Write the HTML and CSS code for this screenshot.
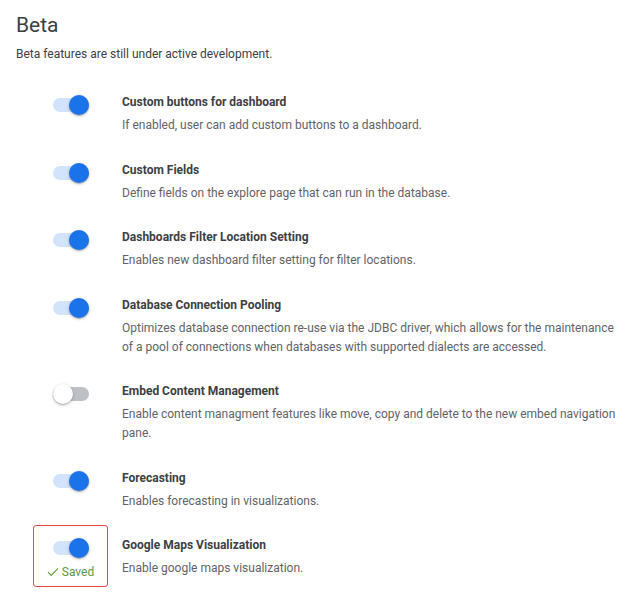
FILE: index.html
```html
<!DOCTYPE html>
<html lang="en">
<head>
<meta charset="utf-8">
<title>Beta</title>
<link rel="stylesheet" href="styles.css">
</head>
<body>
<main class="page">
  <h1 class="page-title">Beta</h1>
  <p class="page-intro">Beta features are still under active development.</p>
  <ul class="features">
    <li class="feature">
      <div class="control"><span class="switch on"><span class="knob"></span></span></div>
      <div class="info">
        <div class="name">Custom buttons for dashboard</div>
        <div class="desc">If enabled, user can add custom buttons to a dashboard.</div>
      </div>
    </li>
    <li class="feature">
      <div class="control"><span class="switch on"><span class="knob"></span></span></div>
      <div class="info">
        <div class="name">Custom Fields</div>
        <div class="desc">Define fields on the explore page that can run in the database.</div>
      </div>
    </li>
    <li class="feature">
      <div class="control"><span class="switch on"><span class="knob"></span></span></div>
      <div class="info">
        <div class="name">Dashboards Filter Location Setting</div>
        <div class="desc">Enables new dashboard filter setting for filter locations.</div>
      </div>
    </li>
    <li class="feature">
      <div class="control"><span class="switch on"><span class="knob"></span></span></div>
      <div class="info">
        <div class="name">Database Connection Pooling</div>
        <div class="desc">Optimizes database connection re-use via the JDBC driver, which allows for the maintenance of a pool of connections when databases with supported dialects are accessed.</div>
      </div>
    </li>
    <li class="feature">
      <div class="control"><span class="switch"><span class="knob"></span></span></div>
      <div class="info">
        <div class="name">Embed Content Management</div>
        <div class="desc">Enable content managment features like move, copy and delete to the new embed navigation pane.</div>
      </div>
    </li>
    <li class="feature">
      <div class="control"><span class="switch on"><span class="knob"></span></span></div>
      <div class="info">
        <div class="name">Forecasting</div>
        <div class="desc">Enables forecasting in visualizations.</div>
      </div>
    </li>
    <li class="feature">
      <div class="control highlighted">
        <span class="switch on"><span class="knob"></span></span>
        <span class="saved"><svg class="check" width="12" height="10" viewBox="0 0 12 10" aria-hidden="true"><path d="M1 5.2 L4.2 8.4 L11 1.4" fill="none" stroke="currentColor" stroke-width="1.1"/></svg>Saved</span>
      </div>
      <div class="info">
        <div class="name">Google Maps Visualization</div>
        <div class="desc">Enable google maps visualization.</div>
      </div>
    </li>
  </ul>
</main>
</body>
</html>
```

FILE: styles.css
```css
html, body {
  margin: 0;
  padding: 0;
  background: #ffffff;
}

body {
  font-family: Roboto, "Noto Sans", "Liberation Sans", sans-serif;
  color: #3c4043;
}

.page {
  padding: 13px 17px 0 16px;
}

.page-title {
  margin: 0;
  font-size: 21px;
  line-height: 24px;
  font-weight: 400;
  color: #3c4043;
}

.page-intro {
  margin: 7.5px 0 0 0;
  font-size: 12px;
  line-height: 19px;
  color: #3c4043;
}

.features {
  list-style: none;
  margin: 28.5px 0 0 0;
  padding: 0;
  display: flex;
  flex-direction: column;
  gap: 24.5px;
}

.feature {
  display: flex;
  align-items: flex-start;
  gap: 14px;
}

.control {
  box-sizing: border-box;
  width: 75px;
  margin-left: 17px;
  margin-top: -10px;
  padding-top: 12px;
  border: 1.5px solid transparent;
  border-radius: 3px;
  display: flex;
  flex-direction: column;
  align-items: center;
  flex: none;
}

.control.highlighted {
  border-color: #e94848;
  height: 62px;
}

.switch {
  position: relative;
  display: block;
  width: 36px;
  height: 20px;
}

.switch::before {
  content: "";
  position: absolute;
  left: 0;
  right: 0;
  top: 3px;
  height: 14px;
  border-radius: 7px;
  background: #bdc1c6;
}

.switch.on::before {
  background: #d2e3fc;
}

.knob {
  position: absolute;
  top: 0;
  left: 0;
  width: 20px;
  height: 20px;
  border-radius: 50%;
  background: #ffffff;
  box-shadow: 0 1px 3px rgba(60, 64, 67, 0.35), 0 1px 1px rgba(60, 64, 67, 0.2);
}

.switch.on .knob {
  left: auto;
  right: 0;
  background: #1a73e8;
}

.saved {
  display: flex;
  align-items: center;
  gap: 3px;
  margin-top: 6px;
  font-size: 12px;
  line-height: 16px;
  color: #5a9a3b;
}

.check {
  display: block;
  color: #5a9a3b;
}

.info {
  flex: 1;
  min-width: 0;
}

.name {
  font-size: 12px;
  line-height: 20px;
  font-weight: 700;
  color: #3c4043;
}

.desc {
  margin-top: 4px;
  font-size: 12px;
  line-height: 19px;
  color: #5f6368;
}
```
